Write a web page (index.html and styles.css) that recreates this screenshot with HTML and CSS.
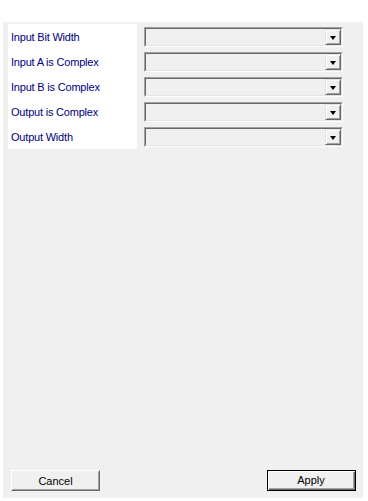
FILE: index.html
```html
<!DOCTYPE html>
<html>
<head>
<meta charset="utf-8">
<link rel="stylesheet" href="styles.css">
</head>
<body>
<div class="panel">
  <div class="form">
    <div class="labels">
      <div class="label">Input Bit Width</div>
      <div class="label">Input A is Complex</div>
      <div class="label">Input B is Complex</div>
      <div class="label">Output is Complex</div>
      <div class="label">Output Width</div>
    </div>
    <div class="fields">
      <div class="row"><div class="combo"><div class="combo-in"><span class="drop"><span class="arrow"></span></span></div></div></div>
      <div class="row"><div class="combo"><div class="combo-in"><span class="drop"><span class="arrow"></span></span></div></div></div>
      <div class="row"><div class="combo"><div class="combo-in"><span class="drop"><span class="arrow"></span></span></div></div></div>
      <div class="row"><div class="combo"><div class="combo-in"><span class="drop"><span class="arrow"></span></span></div></div></div>
      <div class="row"><div class="combo"><div class="combo-in"><span class="drop"><span class="arrow"></span></span></div></div></div>
    </div>
  </div>
  <div class="spacer"></div>
  <div class="buttons">
    <div class="btn"><div class="btn-in">Cancel</div></div>
    <div class="btn default"><div class="btn-in">Apply</div></div>
  </div>
</div>
</body>
</html>
```

FILE: styles.css
```css
html, body {
  margin: 0;
  padding: 0;
  background: #ffffff;
}
body {
  width: 368px;
  height: 501px;
  overflow: hidden;
  font-family: "Liberation Sans", Arial, sans-serif;
  font-size: 11px;
}
.panel {
  margin: 22px 0 0 3px;
  width: 360px;
  height: 476px;
  background: #f0f0f0;
  display: flex;
  flex-direction: column;
  box-sizing: border-box;
  padding: 2px 7px 7px 5px;
}
.form {
  display: flex;
  gap: 7px;
}
.labels {
  width: 129px;
  background: #ffffff;
  display: flex;
  flex-direction: column;
}
.label {
  height: 25px;
  display: flex;
  align-items: center;
  padding-left: 3px;
  color: #000080;
  letter-spacing: -0.2px;
}
.fields {
  display: flex;
  flex-direction: column;
}
.row {
  height: 25px;
  box-sizing: border-box;
  padding-top: 3px;
}
.combo {
  width: 199px;
  height: 20px;
  box-sizing: border-box;
  border: 1px solid;
  border-color: #a0a0a0 #ffffff #ffffff #a0a0a0;
}
.combo-in {
  height: 100%;
  box-sizing: border-box;
  border: 1px solid;
  border-color: #696969 #e3e3e3 #e3e3e3 #696969;
  background: #f0f0f0;
  display: flex;
  justify-content: flex-end;
}
.drop {
  width: 16px;
  height: 16px;
  box-sizing: border-box;
  border: 1px solid;
  border-color: #e3e3e3 #696969 #696969 #e3e3e3;
  box-shadow: inset 1px 1px 0 #ffffff, inset -1px -1px 0 #a0a0a0;
  background: #f0f0f0;
  display: flex;
  align-items: center;
  justify-content: center;
}
.arrow {
  width: 0;
  height: 0;
  border-left: 3.5px solid transparent;
  border-right: 3.5px solid transparent;
  border-top: 4px solid #000000;
  margin-top: 1px;
}
.spacer {
  flex: 1;
}
.buttons {
  display: flex;
  justify-content: space-between;
  padding-left: 3px;
}
.btn {
  width: 89px;
  height: 21px;
  box-sizing: border-box;
  border: 1px solid;
  border-color: #ffffff #696969 #696969 #ffffff;
  background: #f0f0f0;
}
.btn-in {
  height: 100%;
  box-sizing: border-box;
  border: 1px solid;
  border-color: #f0f0f0 #a0a0a0 #a0a0a0 #f0f0f0;
  display: flex;
  align-items: center;
  justify-content: center;
  color: #000000;
}
.btn.default {
  border-color: #000000;
  box-shadow: inset 1px 1px 0 #ffffff, inset -1px -1px 0 #696969;
}
.btn.default .btn-in {
  border-color: #ffffff #a0a0a0 #a0a0a0 #ffffff;
  border-width: 0 1px 1px 0;
  margin: 1px;
  height: calc(100% - 2px);
  border-color: transparent #a0a0a0 #a0a0a0 transparent;
}
```
